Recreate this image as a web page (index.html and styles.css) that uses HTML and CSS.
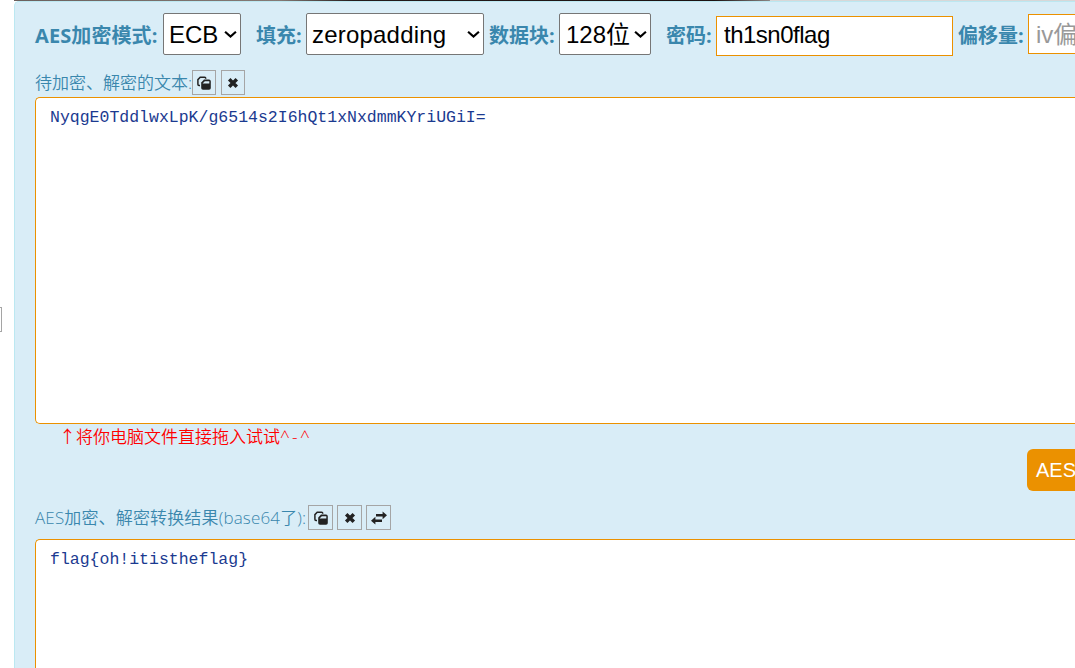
FILE: index.html
```html
<!DOCTYPE html>
<html lang="zh-CN">

<head>
    <meta charset="utf-8">
    <title>AES</title>
    <link rel="stylesheet" href="styles.css">
</head>

<body>
    <svg width="0" height="0" class="sprite">
        <symbol id="copy" viewBox="0 0 16 16">
            <path d="M4 10.4 H3 Q1.9 10.4 1.9 9.2 V4.6 L4.2 2.3 H8.6 Q9.8 2.3 9.8 3.8" fill="none" stroke="#222" stroke-width="1.5" />
            <path d="M8 4.6 H13 Q14.8 4.6 14.8 6.4 V13 Q14.8 14.8 13 14.8 H7 Q5.2 14.8 5.2 13 V7.4 Z" fill="#222" />
            <path d="M6.6 8.6 L8.8 6.2 H13.3 V8.6 Z" fill="#d9edf7" />
        </symbol>
        <symbol id="close" viewBox="0 0 16 16">
            <path d="M4.2 4.2 L11.8 11.8 M11.8 4.2 L4.2 11.8" stroke="#222" stroke-width="3.5" />
        </symbol>
        <symbol id="swap" viewBox="0 0 16 16">
            <path d="M16 5.3 L11.6 1.4 V4 H5 V6.6 H11.6 V9.2 Z M0 10.7 L4.4 6.8 V9.4 H11 V12 H4.4 V14.6 Z" fill="#222" />
        </symbol>
    </svg>

    <div class="side"><div class="side-box"></div></div>

    <div class="main">
        <div class="banner"></div>
        <div class="panel">
            <div class="options">
                <label class="mode-label">AES加密模式:</label>
                <div class="select mode">ECB<svg class="arrow" viewBox="0 0 12 8"><path d="M1 1.5 L6 6 L11 1.5" /></svg></div>
                <label class="pad">填充:</label>
                <div class="select padding">zeropadding<svg class="arrow" viewBox="0 0 12 8"><path d="M1 1.5 L6 6 L11 1.5" /></svg></div>
                <label class="block">数据块:</label>
                <div class="select size">128位<svg class="arrow" viewBox="0 0 12 8"><path d="M1 1.5 L6 6 L11 1.5" /></svg></div>
                <label class="pwd">密码:</label>
                <input class="key" type="text" value="th1sn0flag">
                <label class="offset">偏移量:</label>
                <input class="iv" type="text" placeholder="iv偏移量">
            </div>

            <div class="title source-title">
                <span class="title-src">待加密、解密的文本:</span>
                <button class="tool"><svg><use href="#copy" /></svg></button>
                <button class="tool"><svg><use href="#close" /></svg></button>
            </div>
            <div class="text source">NyqgE0TddlwxLpK/g6514s2I6hQt1xNxdmmKYriUGiI=</div>
            <p class="tip">↑将你电脑文件直接拖入试试<span class="face">^-^</span></p>

            <div class="actions"><button class="encrypt">AES加密</button></div>

            <div class="title result-title">
                <span class="title-res">AES加密、解密转换结果(base64了):</span>
                <button class="tool"><svg><use href="#copy" /></svg></button>
                <button class="tool"><svg><use href="#close" /></svg></button>
                <button class="tool"><svg><use href="#swap" /></svg></button>
            </div>
            <div class="text result">flag{oh!itistheflag}</div>
        </div>
    </div>
</body>

</html>
```
FILE: styles.css
```css
* {
    box-sizing: border-box;
}

body {
    margin: 0;
    height: 668px;
    display: flex;
    overflow: hidden;
    background-color: white;
    font-family: "Open Sans", "Noto Sans CJK SC", sans-serif;
    color: #3a87ad;
}

.sprite {
    position: absolute;
}

.side {
    width: 14px;
    flex: none;
    padding-top: 307px;
}

.side-box {
    width: 2px;
    height: 25px;
    border: 1px solid #a5a5a5;
    border-left: none;
}

.main {
    flex: 1;
    min-width: 0;
    overflow: hidden;
}

.banner {
    height: 1px;
    background: linear-gradient(90deg, #6b605d, #857a75 25%, #251b1b 32%, #1c1111 66%, #8a8482 71.2%, #d8d8d8 71.3%);
}

.panel {
    height: 667px;
    padding: 11px 0 0 20px;
    background-color: #d9edf7;
    border: 1px solid #bce8f1;
    border-right: none;
    border-bottom: none;
    border-radius: 5px 0 0 0;
    overflow: hidden;
}

.options {
    display: flex;
    height: 43px;
    align-items: flex-start;
}

.options label {
    flex: none;
    font-size: 20px;
    font-weight: bold;
    line-height: 46px;
    white-space: nowrap;
}

.mode-label {
    width: 128px;
    letter-spacing: 0.1px;
}

.pad {
    width: 50px;
    margin-left: 15px;
}

.block {
    width: 70px;
    margin-left: 5px;
}

.pwd {
    width: 50px;
    margin-left: 15px;
}

.offset {
    width: 70px;
    margin-left: 5px;
}

.select {
    display: flex;
    flex: none;
    align-items: center;
    justify-content: space-between;
    height: 42px;
    padding: 1px 3px 0 5px;
    border: 1px solid #767676;
    border-radius: 2px;
    background-color: white;
    color: black;
    font-family: "Liberation Sans", "Noto Sans CJK SC", sans-serif;
    font-size: 24px;
    line-height: 40px;
    white-space: nowrap;
}

.mode {
    width: 78px;
}

.padding {
    width: 178px;
    letter-spacing: 0.2px;
}

.size {
    width: 92px;
    padding-left: 6px;
}

.arrow {
    width: 13px;
    height: 9px;
    flex: none;
    fill: none;
    stroke: black;
    stroke-width: 2;
}

.options input {
    flex: none;
    height: 40px;
    padding: 0 7px;
    border: 1px solid #eb9100;
    outline: none;
    background-color: white;
    color: black;
    font-family: "Liberation Sans", "Noto Sans CJK SC", sans-serif;
    font-size: 24px;
}

.options .key {
    width: 237px;
    margin-top: 3px;
    padding-bottom: 2px;
    letter-spacing: -0.5px;
}

.options .iv {
    width: 240px;
    margin-top: 1px;
    padding-top: 2px;
}

.iv::placeholder {
    color: #999;
}

.title {
    display: flex;
    height: 26px;
    margin-top: 14px;
    font-size: 17px;
    font-weight: 350;
    line-height: 26px;
    white-space: nowrap;
}

.title-src {
    width: 157px;
}

.title-res {
    width: 273px;
    letter-spacing: 0.15px;
}

.tool {
    display: flex;
    align-items: center;
    justify-content: center;
    width: 25px;
    height: 25px;
    margin-right: 4px;
    padding: 0;
    border: 1px solid #a5a5a5;
    background: none;
}

.source-title .tool {
    width: 24px;
    margin-right: 5px;
}

.tool svg {
    width: 16px;
    height: 16px;
}

.text {
    padding: 7px 14px;
    background-color: white;
    border: 1px solid #eb9100;
    border-right: none;
    border-radius: 5px 0 0 5px;
    color: #1b3a90;
    font-family: "Liberation Mono", monospace;
    font-size: 16.5px;
    line-height: 26px;
    white-space: nowrap;
}

.source {
    height: 327px;
    margin-top: 1px;
}

.tip {
    margin: 0 0 0 24px;
    color: red;
    font-size: 17px;
    font-weight: 350;
    line-height: 25px;
}

.face {
    letter-spacing: 2.4px;
}

.actions {
    height: 42px;
    padding-left: 992px;
}

.encrypt {
    width: 120px;
    height: 42px;
    padding: 0 9px 4px;
    border: none;
    border-radius: 6px;
    background-color: #eb9100;
    color: white;
    font-family: "Liberation Sans", "Noto Sans CJK SC", sans-serif;
    font-size: 20px;
    text-align: left;
}

.result {
    height: 200px;
    margin-top: 8px;
}
```
